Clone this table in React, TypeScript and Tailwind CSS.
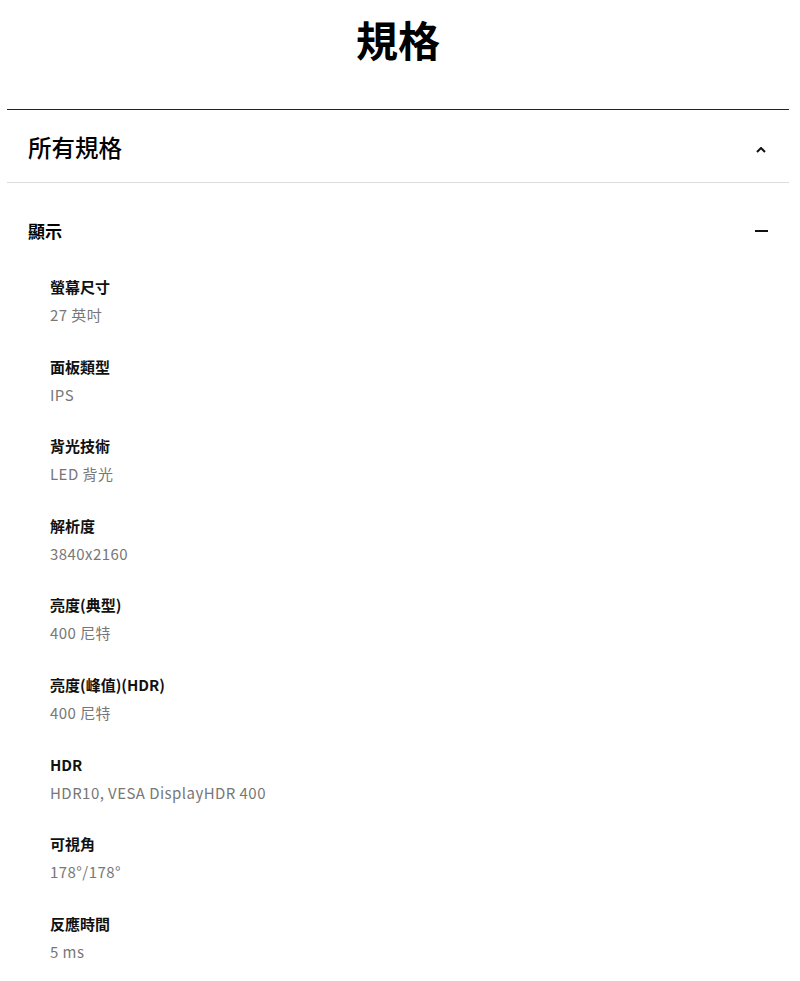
import React from 'react';

const FONT = '[font-family:"Noto_Sans_CJK_TC","Noto_Sans",sans-serif]';

const specs: { label: string; value: string }[] = [
    { label: '螢幕尺寸', value: '27 英吋' },
    { label: '面板類型', value: 'IPS' },
    { label: '背光技術', value: 'LED 背光' },
    { label: '解析度', value: '3840x2160' },
    { label: '亮度(典型)', value: '400 尼特' },
    { label: '亮度(峰值)(HDR)', value: '400 尼特' },
    { label: 'HDR', value: 'HDR10, VESA DisplayHDR 400' },
    { label: '可視角', value: '178°/178°' },
    { label: '反應時間', value: '5 ms' },
];

export default function App() {
    return (
        <div className={`${FONT} min-h-[981px] bg-white text-black pl-[7px] pr-[11px]`}>
            {/* Page title */}
            <h1 className="pt-[6px] h-[109px] text-center text-[42px] leading-[66px] font-bold">規格</h1>

            {/* Accordion */}
            <div className="border-t border-[#222]">
                <button className="w-full h-[73px] flex items-center justify-between pl-[21px] pr-[23px] border-b border-[#dcdcdc]">
                    <span className="text-[23.5px] leading-[32px] font-medium pt-[2px]">所有規格</span>
                    <svg width="10" height="6" viewBox="0 0 10 6" className="mt-[8px]">
                        <path d="M1 5 L5 1 L9 5" fill="none" stroke="#111" strokeWidth="2" />
                    </svg>
                </button>

                <div className="pl-[21px] pr-[21px]">
                    <div className="pt-[34px] flex items-center justify-between">
                        <span className="text-[17px] leading-[28px] font-bold">顯示</span>
                        <span className="block w-[13px] h-[2px] bg-[#111]" />
                    </div>

                    <ul className="mt-[28px] pl-[22px]">
                        {specs.map((s) => (
                            <li key={s.label} className="pb-[23.6px]">
                                <div className="text-[15px] leading-[28px] font-bold text-[#111]">{s.label}</div>
                                <div className="text-[15px] leading-[28px] tracking-[0.45px] text-[#777]">{s.value}</div>
                            </li>
                        ))}
                    </ul>
                </div>
            </div>
        </div>
    );
}
